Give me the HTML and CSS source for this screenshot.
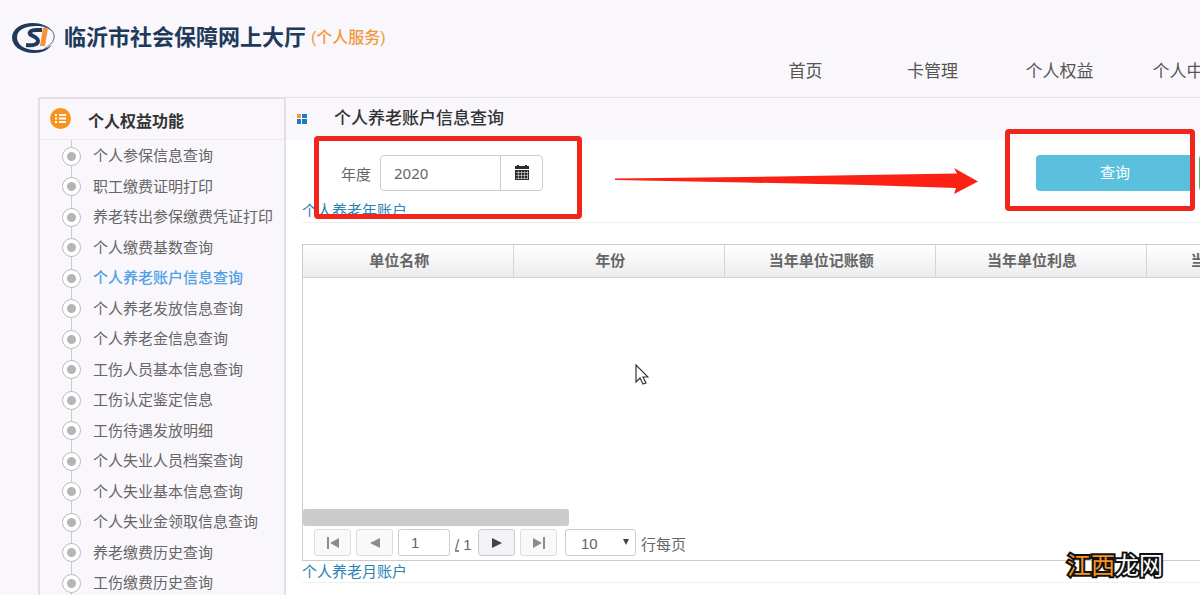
FILE: index.html
```html
<!DOCTYPE html>
<html lang="zh-CN">
<head>
<meta charset="utf-8">
<title>临沂市社会保障网上大厅</title>
<link rel="stylesheet" href="styles.css">
</head>
<body>
<div class="page">
  <header class="header">
    <div class="brand">
      <svg class="logo" width="44" height="32" viewBox="0 0 44 32" aria-hidden="true">
        <path fill="#213a5c" fill-rule="evenodd" d="M21 1C9 1 0 7 0 15.500S9 31 22 31c8 0 14-3 18-8-5 4-10 5-17 5C13 28 5 23 5 15.500S13 4 24 4c7 0 12 2 15 5C36 4 29 1 21 1z"/>
        <path fill="none" stroke="#51617a" stroke-width="1" d="M30 3c8 2 13 7 12 13-1 5-5 8-10 11"/>
        <path fill="none" stroke="#213a5c" stroke-width="4" d="M30 8h-6c-5 0-7 2-6 4 1 2 8 3 8 7 0 3-4 5-12 4"/>
        <path fill="#f5923a" d="M31 6h5l-3 18h-5z"/>
      </svg>
      <h1 class="brand-name">临沂市社会保障网上大厅</h1>
      <span class="brand-sub">(个人服务)</span>
    </div>
    <nav class="nav">
      <a href="#">首页</a>
      <a href="#">卡管理</a>
      <a href="#">个人权益</a>
      <a href="#">个人中心</a>
    </nav>
  </header>

  <div class="layout">
    <aside class="sidebar">
      <h2 class="side-title">
        <svg width="21" height="21" viewBox="0 0 21 21" aria-hidden="true">
          <circle cx="10.500" cy="10.500" r="10.500" fill="#f7941e"/>
          <path stroke="#fff" stroke-width="2" d="M5 7h2M5 10.500h2M5 14h2M9 7h7M9 10.500h7M9 14h7"/>
        </svg>
        <span>个人权益功能</span>
      </h2>
      <ul class="menu">
        <li><a href="#">个人参保信息查询</a></li>
        <li><a href="#">职工缴费证明打印</a></li>
        <li><a href="#">养老转出参保缴费凭证打印</a></li>
        <li><a href="#">个人缴费基数查询</a></li>
        <li><a href="#" class="active">个人养老账户信息查询</a></li>
        <li><a href="#">个人养老发放信息查询</a></li>
        <li><a href="#">个人养老金信息查询</a></li>
        <li><a href="#">工伤人员基本信息查询</a></li>
        <li><a href="#">工伤认定鉴定信息</a></li>
        <li><a href="#">工伤待遇发放明细</a></li>
        <li><a href="#">个人失业人员档案查询</a></li>
        <li><a href="#">个人失业基本信息查询</a></li>
        <li><a href="#">个人失业金领取信息查询</a></li>
        <li><a href="#">养老缴费历史查询</a></li>
        <li><a href="#">工伤缴费历史查询</a></li>
      </ul>
    </aside>

    <main class="main">
      <div class="main-title">
        <svg width="10" height="10" viewBox="0 0 10 10" aria-hidden="true">
          <path fill="#f29a3c" d="M0 0h4v4H0z"/>
          <path fill="#1c7cc0" d="M5 0h5v4H5zM0 5h4v5H0zM5 5h5v5H5z"/>
        </svg>
        <h2>个人养老账户信息查询</h2>
      </div>
      <div class="content">
        <form class="search">
          <label for="year">年度</label>
          <div class="date-group">
            <input id="year" type="text" value="2020">
            <button type="button" aria-label="选择年份">
              <svg width="14" height="15" viewBox="0 0 14 15" aria-hidden="true">
                <path fill="#2b2b2b" d="M0 1h2V0h2v1h6V0h2v1h2v3H0zM0 5h14v10H0z"/>
                <path stroke="#fff" d="M1 7.500h12M1 10.500h12M1 13.500h12M3.500 6v8M6.500 6v8M9.500 6v8M12.500 6v8" stroke-opacity=".5"/>
              </svg>
            </button>
          </div>
          <div class="actions">
            <button type="button" class="btn query">查询</button>
            <button type="button" class="btn export" aria-label="导出"></button>
          </div>
        </form>
        <h3 class="section"><a href="#">个人养老年账户</a></h3>
        <section class="grid">
          <div class="grid-view">
            <table class="table">
              <thead>
                <tr><th>单位名称</th><th>年份</th><th>当年单位记账额</th><th>当年单位利息</th><th>当年个人记账额</th></tr>
              </thead>
            </table>
            <div class="scrollbar"></div>
          </div>
          <div class="pager">
            <button type="button" disabled aria-label="首页"><svg width="12" height="12" viewBox="0 0 12 12"><path fill="#8c8c8c" d="M0 0h2v12H0zM12 1v10L3 6z"/></svg></button>
            <button type="button" disabled aria-label="上一页"><svg width="12" height="12" viewBox="0 0 12 12"><path fill="#8c8c8c" d="M11 1v10L1 6z"/></svg></button>
            <input type="text" value="1" aria-label="页码">
            <span class="total"><abbr title="共">/</abbr> 1</span>
            <button type="button" class="next" aria-label="下一页"><svg width="12" height="12" viewBox="0 0 12 12"><path fill="#444" d="M1 1v10l10-5z"/></svg></button>
            <button type="button" disabled aria-label="末页"><svg width="12" height="12" viewBox="0 0 12 12"><path fill="#8c8c8c" d="M0 1v10l9-5zM10 0h2v12h-2z"/></svg></button>
            <span class="size">
              <select id="size"><option>10</option><option>20</option></select>
              <svg width="6" height="6" viewBox="0 0 6 6" aria-hidden="true"><path fill="#444" d="M0 0h6L3 6z"/></svg>
            </span>
            <label for="size">行每页</label>
          </div>
        </section>
        <h3 class="section month"><a href="#">个人养老月账户</a></h3>
      </div>
    </main>
  </div>

  <div class="mark mark-year"></div>
  <div class="mark mark-query"></div>
  <svg class="arrow" width="364" height="28" viewBox="0 0 364 28" aria-hidden="true">
    <path fill="#fb2114" d="M0 10.500L130 9 250 7 342 5.500 339 0 363 13.500 339 26 341 20 250 17 130 14.500 0 12z"/>
  </svg>
  <svg class="pointer" width="14" height="21" viewBox="0 0 14 21" aria-hidden="true">
    <path fill="#fff" stroke="#333" stroke-width="1.200" d="M1 1v17l4-4 3 6 3-1-3-6h5z"/>
  </svg>
  <div class="watermark"><span>江西</span>龙网</div>
</div>
</body>
</html>
```

FILE: styles.css
```css
* { box-sizing: border-box; }

body {
  margin: 0;
  background: #f9f7fb;
  color: #666;
  font: 15px/20px "Liberation Sans", "Noto Sans CJK SC", sans-serif;
}

a { color: inherit; text-decoration: none; }
h1, h2, h3, ul { margin: 0; padding: 0; }
button, input, select { margin: 0; font: inherit; color: inherit; }
svg { display: block; flex: none; }

.page {
  position: relative;
  display: flex;
  flex-direction: column;
  height: 100vh;
  overflow: hidden;
}

/* Header */
.header { flex: none; padding-top: 22px; }
.brand { display: flex; align-items: center; height: 32px; padding-left: 12px; }
.brand-name { margin-left: 8px; font-size: 22px; line-height: 34px; color: #213a5c; white-space: nowrap; }
.brand-sub { margin-left: 5px; font-size: 16px; font-weight: 500; color: #f09a3e; white-space: nowrap; }
.nav { display: flex; height: 43px; padding-left: 742px; color: #555; font-size: 17px; line-height: 36px; }
.nav a { flex: none; width: 127px; text-align: center; }

.layout { display: flex; flex: 1; min-height: 0; padding-left: 38px; }

/* Sidebar */
.sidebar {
  flex: none;
  width: 248px;
  border: 1px solid #e2e0e5;
  border-width: 2px 2px 0;
}
.side-title {
  display: flex;
  gap: 17px;
  height: 41px;
  padding: 9px 0 0 10px;
  border-bottom: 1px solid #ebe9ee;
  color: #333;
  font-size: 16px;
  line-height: 28px;
}
.menu { list-style: none; }
.menu a {
  position: relative;
  display: flex;
  align-items: center;
  gap: 12px;
  height: 30px;
  padding: 2px 0 0 22px;
  white-space: nowrap;
}
.menu li:nth-child(even) a { height: 31px; }
.menu a::before {
  content: "";
  z-index: 1;
  width: 17px;
  height: 17px;
  border: 1px solid #bbb;
  border-radius: 50%;
  background: radial-gradient(circle, #b5b5b5 4px, #fff 5px);
}
.menu a::after {
  content: "";
  position: absolute;
  top: 0;
  bottom: 0;
  left: 31px;
  width: 1px;
  background: #ccc;
}
.menu .active { color: #4f9fe6; font-weight: 500; }

/* Main column */
.main { display: flex; flex: 1; flex-direction: column; min-width: 0; }
.main-title {
  display: flex;
  gap: 27px;
  align-items: center;
  flex: none;
  height: 43px;
  padding-left: 11px;
  border-top: 1px solid #e2e0e5;
  color: #333;
}
.main-title h2 { font-size: 17px; line-height: 24px; font-weight: 500; }
.content { flex: 1; min-width: 0; padding-left: 16px; background: #fff; }

.search { display: flex; height: 60px; padding: 15px 0 0 39px; line-height: 36px; }
.search label { flex: none; width: 39px; padding-top: 2px; }
.date-group {
  display: flex;
  flex: none;
  width: 163px;
  height: 36px;
  border: 1px solid #ccc;
  border-radius: 4px;
}
.date-group input {
  width: 120px;
  padding: 0 13px;
  border: 0;
  border-right: 1px solid #ccc;
  background: none;
  font-family: "Noto Sans", sans-serif;
}
.date-group button {
  display: grid;
  flex: 1;
  place-items: center;
  padding: 0 0 2px;
  border: 0;
  background: none;
}
.actions { display: flex; flex: none; gap: 5px; margin-left: 493px; }
.btn { width: 158px; height: 36px; padding: 0; border: 0; border-radius: 4px; color: #fff; }
.query { background: #5bc0de; }
.export { background: #5cb85c; }

.section {
  height: 23px;
  border-bottom: 1px solid #f0f0f0;
  color: #2a83b5;
  font-size: 15px;
  font-weight: normal;
  line-height: 22px;
}
.month { height: 22px; }

/* Data grid */
.grid { margin-top: 21px; border: 1px solid #ccc; border-right: 0; }
.grid-view { display: flex; flex-direction: column; height: 281px; overflow: hidden; }
.table { flex: none; width: 1055px; border-collapse: collapse; table-layout: fixed; }
.table th {
  height: 32px;
  padding: 0 18px 0 0;
  border: 1px solid #d5d5d5;
  border-width: 0 1px 1px 0;
  background: linear-gradient(#fff, #ececee);
}
.scrollbar { width: 266px; height: 17px; margin-top: auto; border-radius: 3px; background: #cdcacd; }

.pager { display: flex; height: 34px; padding: 3px 0 0 11px; }
.pager button,
.pager input,
.pager select {
  height: 27px;
  padding: 0;
  border: 1px solid #ccc;
  border-radius: 3px;
  background: #fff;
}
.pager button {
  display: grid;
  flex: none;
  width: 37px;
  margin-right: 5px;
  place-items: center;
  border-color: #ddd;
  background: #f9f9f9;
}
.pager .next { border-color: #ccc; background: #f3f3f7; }
.pager input { width: 52px; padding-left: 12px; }
.pager .total { width: 28px; padding-left: 5px; line-height: 31px; }
.pager .size { position: relative; margin: 0 5px 0 3px; }
.pager select { width: 71px; padding: 3px 0 0 15px; appearance: none; }
.size svg { position: absolute; top: 10px; right: 7px; }
.pager label { line-height: 31px; }

/* Annotations over the page */
.mark { position: absolute; border: 5px solid #f0251b; border-radius: 4px; }
.mark-year { top: 136px; left: 314px; width: 268px; height: 83px; }
.mark-query { top: 129px; left: 1005px; width: 190px; height: 82px; }
.arrow { position: absolute; top: 168px; left: 615px; }
.pointer { position: absolute; top: 364px; left: 635px; }
.watermark {
  position: absolute;
  top: 548px;
  left: 1067px;
  color: #fff;
  font: 24px/32px "Noto Sans CJK SC", sans-serif;
  -webkit-text-stroke: 4px #111;
  paint-order: stroke fill;
}
.watermark span { color: #f7941e; }
```
